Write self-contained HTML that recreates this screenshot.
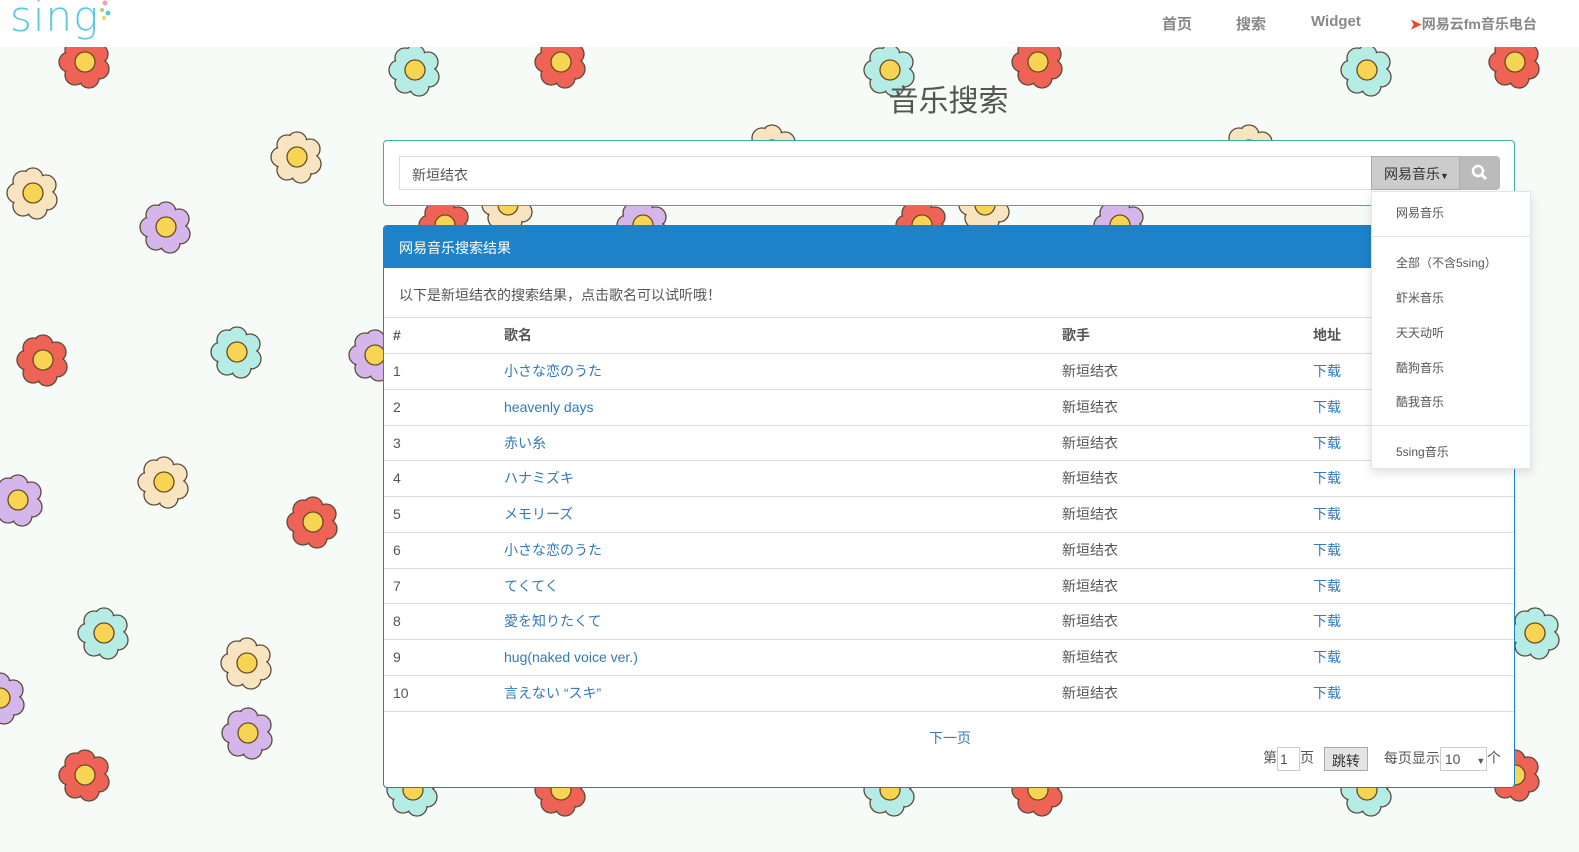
<!DOCTYPE html>
<html><head><meta charset="utf-8">
<style>
*{box-sizing:border-box;margin:0;padding:0}
body{width:1579px;height:852px;overflow:hidden;background:#f7fbf7;font-family:"Liberation Sans","Noto Sans CJK SC",sans-serif;font-size:14px;color:#555;position:relative}
#bg{position:absolute;left:0;top:0}
.hdr{position:absolute;left:0;top:0;width:1579px;height:47px;background:#fff}
.logo{position:absolute;left:10px;top:-8px;font-size:42px;color:#5bc8e0;font-family:"DejaVu Sans",sans-serif;font-weight:200;letter-spacing:1px}
.nav{position:absolute;top:13px;font-size:15px;color:#888;font-weight:bold}
h1{position:absolute;left:0;width:1897px;text-align:center;top:76px;font-size:30px;font-weight:normal;color:#555}
.sp{position:absolute;left:383px;top:140px;width:1132px;height:66px;border:1px solid #3bb39a;border-radius:4px;background:#fff}
.inp{position:absolute;left:15px;top:15px;width:973px;height:34px;border:1px solid #ddd;border-right:none;font-size:14px;color:#555;padding:8px 12px}
.dd{position:absolute;left:987px;top:15px;width:89px;height:34px;background:#ccc;border:1px solid #adadad;font-size:14px;color:#333;padding:7px 0 0 12px;white-space:nowrap}
.sb{position:absolute;left:1076px;top:15px;width:40px;height:34px;background:#bbb;border-radius:0 4px 4px 0}
.menu{position:absolute;left:1371px;top:191px;width:160px;height:278px;background:#fff;border:1px solid #e5e5e5;box-shadow:0 4px 10px rgba(0,0,0,.12);font-size:12px;color:#555;z-index:5}
.menu div{position:absolute;left:24px}
.menu hr{position:absolute;left:0;width:158px;border:none;border-top:1px solid #e5e5e5}
.rp{position:absolute;left:383px;top:225px;width:1132px;height:563px;border:1px solid #1e82c8;border-radius:4px;background:#fff;overflow:hidden}
.rh{height:42px;background:#1e82c8;color:#fff;font-size:14px;padding:12px 15px}
.rt{position:absolute;top:59px;left:15px;font-size:14px;color:#555}
.row{position:absolute;left:0;width:1132px;height:36px;border-top:1px solid #ddd;font-size:14px}
.row span{position:absolute;top:0;line-height:34px}
.a{color:#337ab7}
</style></head><body>
<svg id="bg" width="1579" height="852">
<defs>
<g id="f"><g stroke="#5a4a3a" stroke-width="1.3">
<circle cx="0" cy="-15" r="10"/><circle cx="13" cy="-8" r="10"/><circle cx="14" cy="7" r="10"/><circle cx="4" cy="16" r="10"/><circle cx="-10" cy="13" r="10"/><circle cx="-16" cy="0" r="10"/><circle cx="-10" cy="-12" r="10"/></g>
<g><circle cx="0" cy="-15" r="9"/><circle cx="13" cy="-8" r="9"/><circle cx="14" cy="7" r="9"/><circle cx="4" cy="16" r="9"/><circle cx="-10" cy="13" r="9"/><circle cx="-16" cy="0" r="9"/><circle cx="-10" cy="-12" r="9"/><circle r="14"/></g>
<circle r="10" fill="#f7d454" stroke="#6a4a20" stroke-width="1.3"/></g>
</defs>
<g fill="#ee6356">
<use href="#f" x="85" y="62"/><use href="#f" x="561" y="62"/><use href="#f" x="1038" y="62"/><use href="#f" x="1515" y="62"/>
<use href="#f" x="43" y="360"/><use href="#f" x="313" y="522"/><use href="#f" x="85" y="775"/><use href="#f" x="1515" y="775"/><use href="#f" x="561" y="790"/><use href="#f" x="445" y="225"/><use href="#f" x="922" y="225"/><use href="#f" x="1038" y="790"/></g>
<g fill="#b5ece6">
<use href="#f" x="415" y="70"/><use href="#f" x="890" y="70"/><use href="#f" x="1367" y="70"/><use href="#f" x="237" y="352"/><use href="#f" x="104" y="633"/><use href="#f" x="1535" y="633"/><use href="#f" x="413" y="790"/><use href="#f" x="890" y="790"/><use href="#f" x="1367" y="790"/></g>
<g fill="#f8e4c0">
<use href="#f" x="297" y="157"/><use href="#f" x="33" y="193"/><use href="#f" x="164" y="482"/><use href="#f" x="247" y="663"/><use href="#f" x="508" y="205"/><use href="#f" x="985" y="205"/><use href="#f" x="772" y="150"/><use href="#f" x="1249" y="150"/></g>
<g fill="#d5b6ea">
<use href="#f" x="166" y="227"/><use href="#f" x="375" y="355"/><use href="#f" x="18" y="500"/><use href="#f" x="248" y="733"/><use href="#f" x="643" y="225"/><use href="#f" x="1120" y="225"/><use href="#f" x="0" y="698"/></g>
</svg>
<div class="hdr">
<div class="logo">sing</div>
<svg style="position:absolute;left:96px;top:0" width="20" height="24"><circle cx="9" cy="3" r="2.5" fill="#f2a0b0"/><circle cx="6" cy="10" r="2" fill="#9fd86a"/><circle cx="12" cy="13" r="2.5" fill="#5bc8e0"/><circle cx="8" cy="18" r="2" fill="#f6d45a"/></svg>
<div class="nav" style="left:1162px">首页</div>
<div class="nav" style="left:1236px">搜索</div>
<div class="nav" style="left:1311px">Widget</div>
<div class="nav" style="left:1410px;font-size:14px;top:14px"><span style="color:#e84a2a">➤</span>网易云fm音乐电台</div>
</div>
<h1>音乐搜索</h1>
<div class="sp">
<div class="inp">新垣结衣</div>
<div class="dd">网易音乐<span style="font-size:9px">▼</span></div>
<div class="sb"><svg width="40" height="34"><circle cx="18" cy="15" r="5" fill="none" stroke="#fff" stroke-width="2.5"/><line x1="22" y1="19" x2="26" y2="23" stroke="#fff" stroke-width="3"/></svg></div>
</div>
<div class="rp">
<div class="rh">网易音乐搜索结果</div>
<div class="rt">以下是新垣结衣的搜索结果，点击歌名可以试听哦！</div>
<div class="row" style="top:91px;font-weight:bold;color:#555"><span style="left:9px">#</span><span style="left:120px">歌名</span><span style="left:678px">歌手</span><span style="left:929px">地址</span></div>
<div class="row" style="top:127px"><span style="left:9px">1</span><span class="a" style="left:120px">小さな恋のうた</span><span style="left:678px">新垣结衣</span><span class="a" style="left:929px">下载</span></div>
<div class="row" style="top:163px"><span style="left:9px">2</span><span class="a" style="left:120px">heavenly days</span><span style="left:678px">新垣结衣</span><span class="a" style="left:929px">下载</span></div>
<div class="row" style="top:199px"><span style="left:9px">3</span><span class="a" style="left:120px">赤い糸</span><span style="left:678px">新垣结衣</span><span class="a" style="left:929px">下载</span></div>
<div class="row" style="top:234px"><span style="left:9px">4</span><span class="a" style="left:120px">ハナミズキ</span><span style="left:678px">新垣结衣</span><span class="a" style="left:929px">下载</span></div>
<div class="row" style="top:270px"><span style="left:9px">5</span><span class="a" style="left:120px">メモリーズ</span><span style="left:678px">新垣结衣</span><span class="a" style="left:929px">下载</span></div>
<div class="row" style="top:306px"><span style="left:9px">6</span><span class="a" style="left:120px">小さな恋のうた</span><span style="left:678px">新垣结衣</span><span class="a" style="left:929px">下载</span></div>
<div class="row" style="top:342px"><span style="left:9px">7</span><span class="a" style="left:120px">てくてく</span><span style="left:678px">新垣结衣</span><span class="a" style="left:929px">下载</span></div>
<div class="row" style="top:377px"><span style="left:9px">8</span><span class="a" style="left:120px">愛を知りたくて</span><span style="left:678px">新垣结衣</span><span class="a" style="left:929px">下载</span></div>
<div class="row" style="top:413px"><span style="left:9px">9</span><span class="a" style="left:120px">hug(naked voice ver.)</span><span style="left:678px">新垣结衣</span><span class="a" style="left:929px">下载</span></div>
<div class="row" style="top:449px"><span style="left:9px">10</span><span class="a" style="left:120px">言えない “スキ”</span><span style="left:678px">新垣结衣</span><span class="a" style="left:929px">下载</span></div>
<div class="row" style="top:485px;height:80px"></div>
<div class="a" style="position:absolute;left:545px;top:502px">下一页</div>
<div style="position:absolute;left:879px;top:521px;font-size:14px;color:#555;white-space:nowrap">第<span style="display:inline-block;width:23px;height:24px;border:1px solid #ccc;vertical-align:middle;padding:3px 2px">1</span>页 <span style="display:inline-block;margin-left:6px;width:44px;height:24px;border:1px solid #aaa;background:#e4e4e4;vertical-align:middle;text-align:center;padding-top:3px;color:#333">跳转</span><span style="margin-left:16px">每页显示</span><span style="display:inline-block;width:47px;height:24px;border:1px solid #ccc;vertical-align:middle;padding:3px 4px">10 <small style="font-size:9px;margin-left:12px">▼</small></span>个</div>
</div>
<div class="menu">
<div style="top:12px">网易音乐</div>
<hr style="top:44px">
<div style="top:62px">全部（不含5sing）</div>
<div style="top:97px">虾米音乐</div>
<div style="top:132px">天天动听</div>
<div style="top:167px">酷狗音乐</div>
<div style="top:201px">酷我音乐</div>
<hr style="top:233px">
<div style="top:251px">5sing音乐</div>
</div>
</body></html>
